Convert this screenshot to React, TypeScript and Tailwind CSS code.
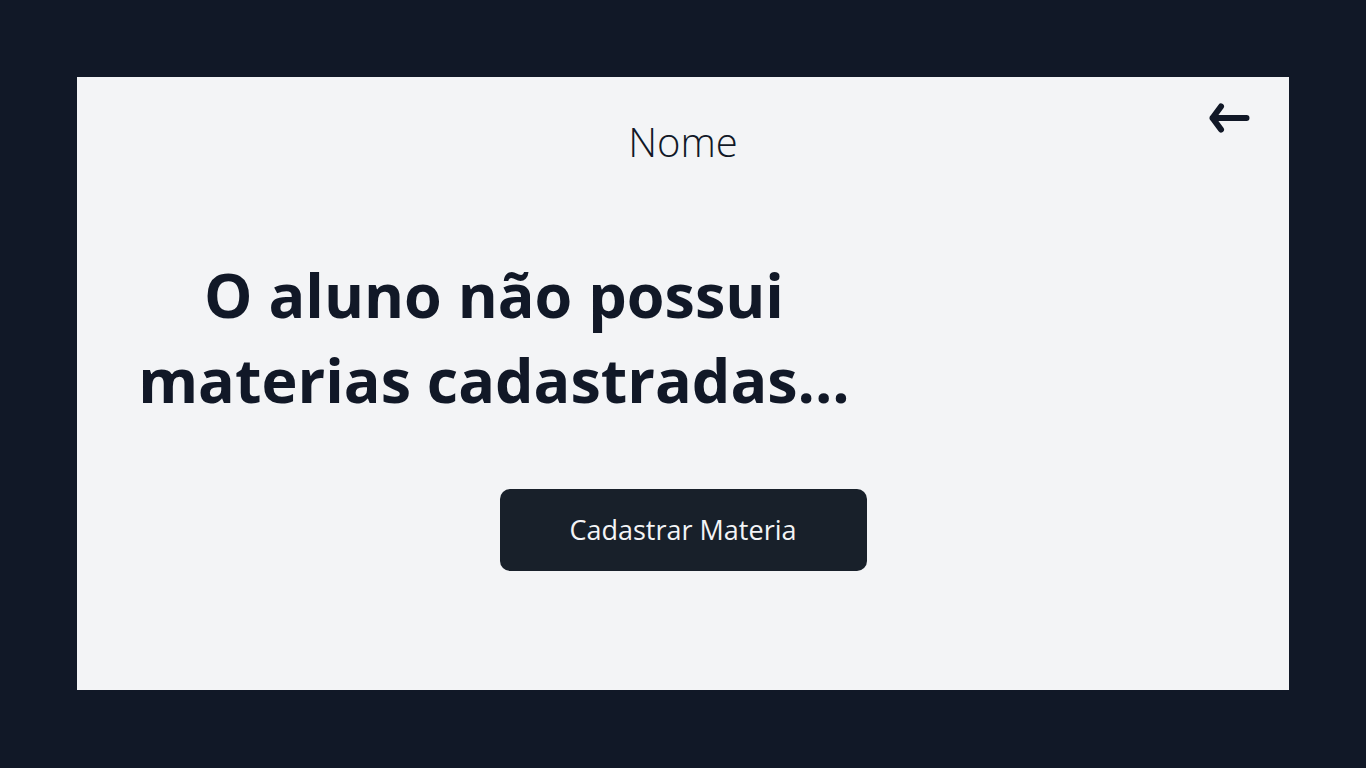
const App: React.FC = () => {
  return (
    <div
      className="min-h-screen bg-[#111827] p-[77px]"
      style={{ fontFamily: '"Open Sans", "Noto Sans", sans-serif' }}
    >
      <div className="relative flex h-[613px] flex-col bg-[#f3f4f6] pt-[41px]">
        {/* voltar */}
        <button className="absolute right-[38px] top-[25px] text-[#111827]">
          <svg width="42" height="32" viewBox="0 0 42 32" fill="none">
            <path
              d="M12 4.5 L3.5 16 L12 27.5 M3.5 16 H37.5"
              stroke="currentColor"
              strokeWidth="6"
              strokeLinecap="round"
              strokeLinejoin="round"
            />
          </svg>
        </button>

        <h1 className="text-center text-[40px] font-light leading-[48px] text-[#111827]">
          Nome
        </h1>

        <div className="mt-[86px] w-[834px]">
          <h2 className="text-center text-[61px] font-bold leading-[85px] text-[#111827]">
            O aluno não possui materias cadastradas...
          </h2>
        </div>

        <div className="mt-[67px] flex justify-center">
          <button className="h-[82px] w-[367px] rounded-[10px] bg-[#18202a] text-[27px] text-[#f3f4f6]">
            Cadastrar Materia
          </button>
        </div>
      </div>
    </div>
  );
};

export default App;
